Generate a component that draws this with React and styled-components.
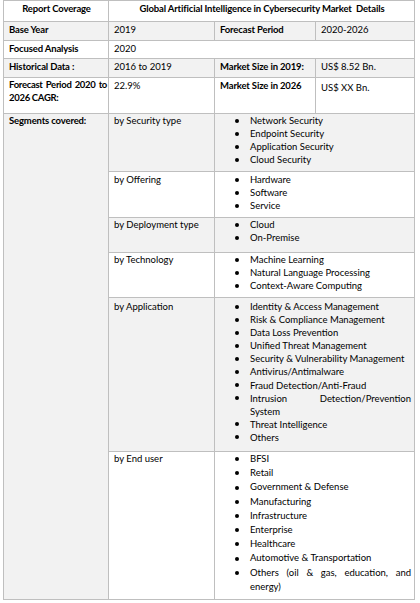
import React from 'react';
import styled, { createGlobalStyle } from 'styled-components';

const Global = createGlobalStyle`
  html, body { margin: 0; padding: 0; background: #ffffff; }
  body { font-family: Lato, "Open Sans", "Liberation Sans", sans-serif; color: #000; }
`;

const Table = styled.div`
  display: grid;
  grid-template-columns: 104px 105px 100px 98px;
  grid-template-rows: 20px 18px 17px 18px 35px 57px 45px 34px 44px 153px 147px;
  gap: 1px;
  padding: 1px;
  margin-left: 3px;
  width: max-content;
  background: #bfbfbf;
  font-size: 9.5px;
  line-height: 13.1px;
`;

const Cell = styled.div`
  background: ${(p) => (p.$shade ? '#f2f2f2' : '#ffffff')};
  grid-column: span ${(p) => p.$span || 1};
  grid-row: span ${(p) => p.$rows || 1};
  padding: ${(p) => p.$top || 0}px ${(p) => (p.$tight ? 1 : 4)}px 0 5px;
  font-weight: ${(p) => (p.$bold ? 700 : 400)};
  letter-spacing: ${(p) => (p.$tight ? '-0.3px' : p.$bold ? '-0.15px' : '0')};
  line-height: ${(p) => p.$lh || 13.1}px;
  text-align: ${(p) => (p.$center ? 'center' : 'justify')};
  white-space: ${(p) => (p.$pre ? 'pre' : 'normal')};
  overflow: hidden;
`;

const ListCell = styled.div`
  background: ${(p) => (p.$shade ? '#f2f2f2' : '#ffffff')};
  grid-column: span 2;
  padding: ${(p) => p.$top || 0}px 3px 0 20px;
  display: flex;
  flex-direction: column;
  line-height: ${(p) => p.$lh}px;
`;

const Item = styled.div`
  display: flex;
  align-items: flex-start;
`;

const Bullet = styled.span`
  flex: 0 0 15px;
  height: ${(p) => p.$lh}px;
  display: flex;
  align-items: center;
  &::before {
    content: '';
    width: 4px;
    height: 4px;
    border-radius: 50%;
    background: #000;
  }
`;

const ItemText = styled.span`
  flex: 1;
  text-align: justify;
`;

const segments = [
  { label: 'by Security type', lh: 13.1, top: 0, items: ['Network Security', 'Endpoint Security', 'Application Security', 'Cloud Security'] },
  { label: 'by Offering', lh: 13.1, top: 1, items: ['Hardware', 'Software', 'Service'] },
  { label: 'by Deployment type', lh: 13.1, top: 0, items: ['Cloud', 'On-Premise'] },
  { label: 'by Technology', lh: 13.1, top: 0, items: ['Machine Learning', 'Natural Language Processing', 'Context-Aware Computing'] },
  {
    label: 'by Application',
    lh: 13.1,
    top: 2,
    items: [
      'Identity & Access Management',
      'Risk & Compliance Management',
      'Data Loss Prevention',
      'Unified Threat Management',
      'Security & Vulnerability Management',
      'Antivirus/Antimalware',
      'Fraud Detection/Anti-Fraud',
      'Intrusion Detection/Prevention System',
      'Threat Intelligence',
      'Others',
    ],
  },
  {
    label: 'by End user',
    lh: 14.2,
    top: 0,
    items: [
      'BFSI',
      'Retail',
      'Government & Defense',
      'Manufacturing',
      'Infrastructure',
      'Enterprise',
      'Healthcare',
      'Automotive & Transportation',
      'Others (oil & gas, education, and energy)',
    ],
  },
];

export default function App() {
  return (
    <>
      <Global />
      <Table>
        <Cell $bold $center $top={1}>Report Coverage</Cell>
        <Cell $bold $center $span={3} $pre $top={1}>Global Artificial Intelligence in Cybersecurity Market  Details</Cell>

        <Cell $shade $bold $top={1}>Base Year</Cell>
        <Cell $shade $top={1}>2019</Cell>
        <Cell $shade $bold $top={1}>Forecast Period</Cell>
        <Cell $shade $top={1}>2020-2026</Cell>

        <Cell $bold $top={1}>Focused Analysis</Cell>
        <Cell $span={3} $top={1}>2020</Cell>

        <Cell $shade $bold $top={1}>Historical Data :</Cell>
        <Cell $shade $top={1}>2016 to 2019</Cell>
        <Cell $shade $bold $top={1}>Market Size in 2019:</Cell>
        <Cell $shade $top={1}>US$ 8.52 Bn.</Cell>

        <Cell $bold $tight $top={1} $lh={12.5}>Forecast Period 2020 to 2026 CAGR:</Cell>
        <Cell $top={1}>22.9%</Cell>
        <Cell $bold $top={1}>Market Size in 2026</Cell>
        <Cell $top={3}>US$ XX Bn.</Cell>

        <Cell $shade $bold $rows={6}>Segments covered:</Cell>
        {segments.map((s, i) => (
          <React.Fragment key={s.label}>
            <Cell $shade={i % 2 === 0} $top={s.top} $lh={s.lh}>{s.label}</Cell>
            <ListCell $shade={i % 2 === 0} $top={s.top} $lh={s.lh}>
              {s.items.map((it) => (
                <Item key={it}>
                  <Bullet $lh={s.lh} />
                  <ItemText>{it}</ItemText>
                </Item>
              ))}
            </ListCell>
          </React.Fragment>
        ))}
      </Table>
    </>
  );
}
